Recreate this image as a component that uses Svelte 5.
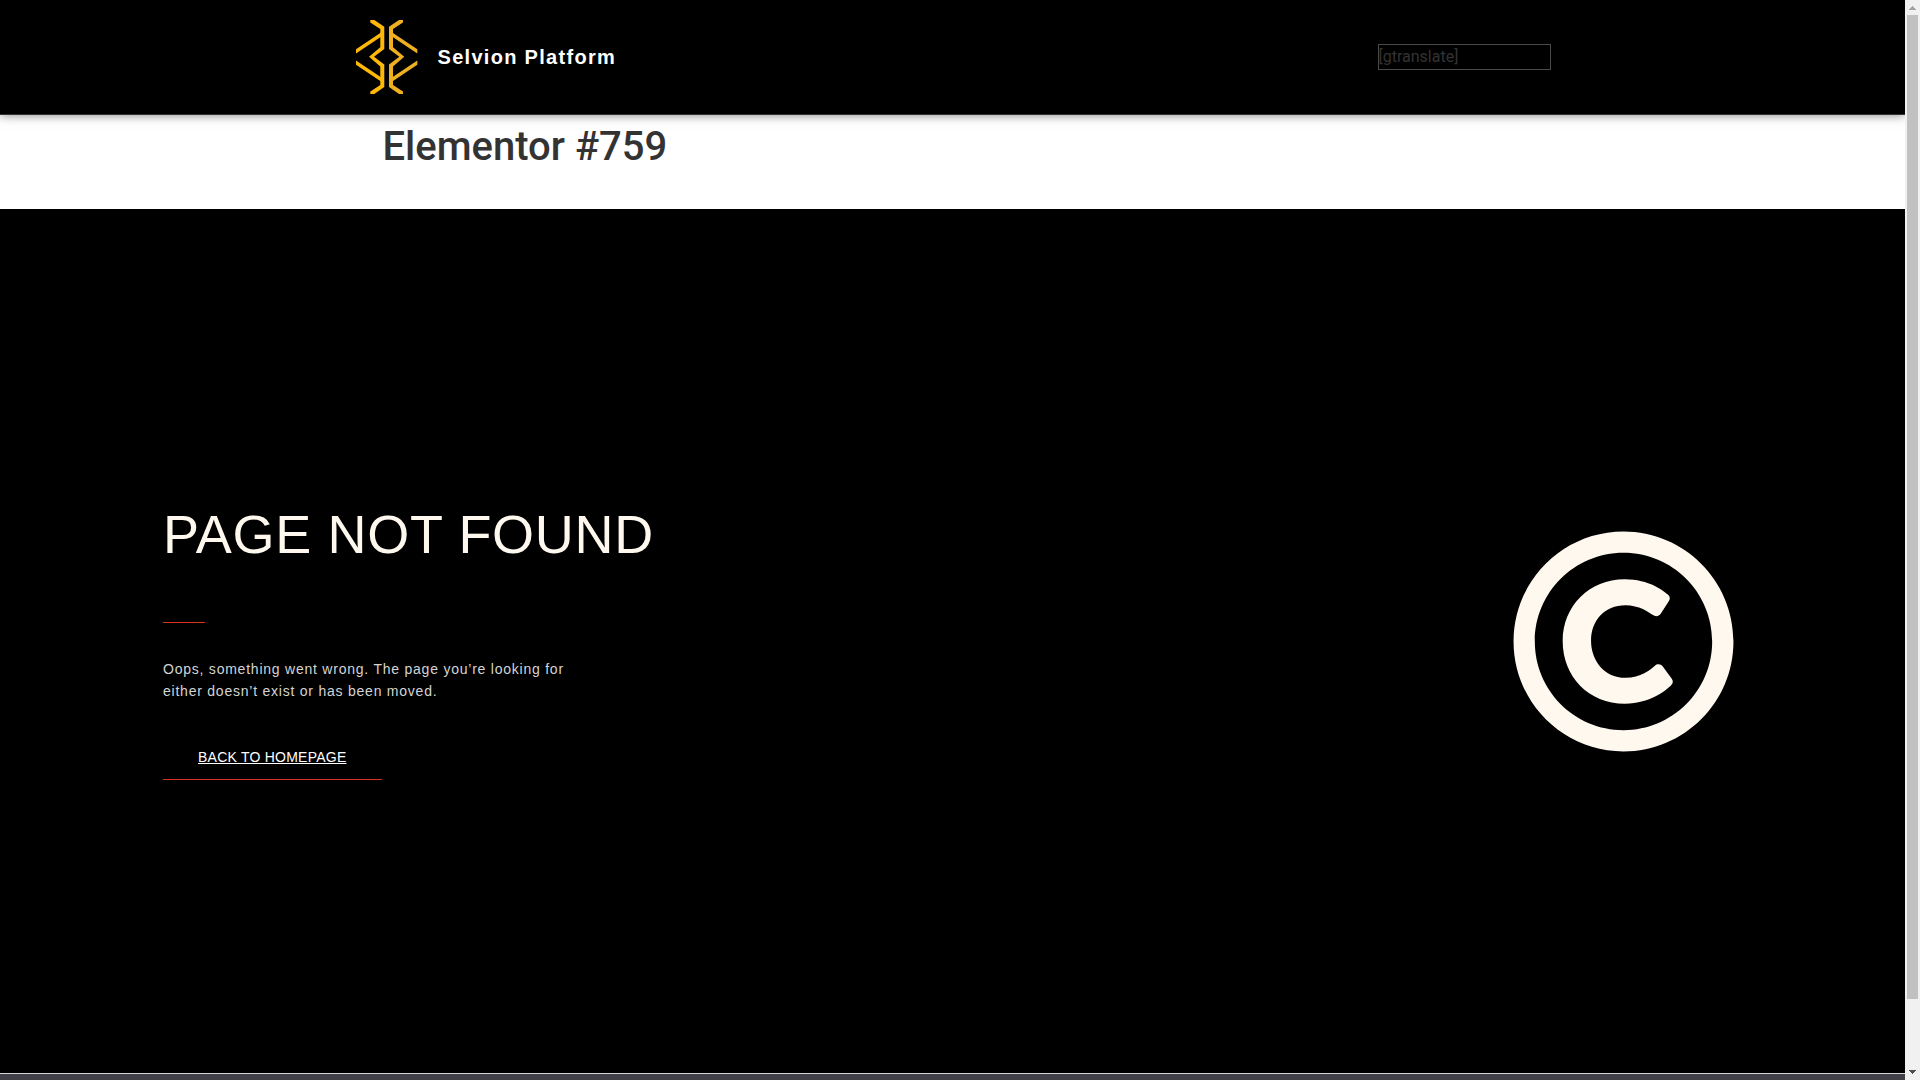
<script>
  const siteName = 'Selvion Platform';
  const pageTitle = 'Elementor #759';
</script>

<div class="viewport">
  <div class="page">
    <header class="site-header">
      <div class="header-inner">
        <a class="brand" href="/">
          <svg class="logo" viewBox="0 0 62 74" aria-hidden="true">
            <g fill="#ffb808">
              <path d="M14.3 0H18.3L28.3 6.7V29L18 36.8L28.3 44.6V67L18.3 74H14.3V71.6L24.3 65V46.6L13 36.8L24.3 27.3V8.9L14.3 2.4z" />
              <path d="M0 29.3L25 12.6V16.8L0 33.5z" />
              <path d="M0 44.7L25 61.4V57.2L0 40.5z" />
            </g>
            <g fill="#eeb020" transform="translate(61.3 0) scale(-1 1)">
              <path d="M14.3 0H18.3L28.3 6.7V29L18 36.8L28.3 44.6V67L18.3 74H14.3V71.6L24.3 65V46.6L13 36.8L24.3 27.3V8.9L14.3 2.4z" />
              <path d="M0 29.3L25 12.6V16.8L0 33.5z" />
              <path d="M0 44.7L25 61.4V57.2L0 40.5z" />
            </g>
          </svg>
          <span class="brand-name">{siteName}</span>
        </a>
        <div class="translate">[gtranslate]</div>
      </div>
    </header>

    <main>
      <div class="page-header">
        <h1>{pageTitle}</h1>
      </div>

      <section class="hero">
        <div class="hero-text">
          <h2>PAGE NOT FOUND</h2>
          <hr />
          <p>Oops, something went wrong. The page you’re looking for either doesn’t exist or has been moved.</p>
          <a class="button" href="/">BACK TO HOMEPAGE</a>
        </div>
        <svg class="hero-icon" viewBox="0 0 512 512" aria-hidden="true">
          <path d="M256 8C119.033 8 8 119.033 8 256s111.033 248 248 248 248-111.033 248-248S392.967 8 256 8zm0 448c-110.532 0-200-89.451-200-200 0-110.531 89.451-200 200-200 110.532 0 200 89.451 200 200 0 110.532-89.451 200-200 200zm107.351-101.064c-9.614 9.712-45.53 41.396-104.065 41.396-82.43 0-140.484-61.425-140.484-141.567 0-79.152 60.275-139.401 139.762-139.401 55.531 0 88.738 26.62 97.593 34.779a11.965 11.965 0 0 1 1.936 15.322l-18.155 28.113c-3.841 5.95-11.966 7.282-17.499 2.921-8.595-6.776-31.814-22.538-61.708-22.538-48.303 0-77.916 35.33-77.916 80.082 0 41.589 26.888 83.692 78.277 83.692 32.657 0 56.843-19.039 65.726-27.225 5.27-4.857 13.596-4.039 17.82 1.738l19.865 27.17a11.947 11.947 0 0 1-1.152 15.518z" />
        </svg>
      </section>
    </main>

    <footer class="site-footer"></footer>
  </div>

  <div class="scrollbar" aria-hidden="true">
    <svg class="arrow" viewBox="0 0 7 4" fill="#a3a3a3" shape-rendering="crispEdges"><path d="M3 0h1v1h1v1h1v1h1v1H0V3h1V2h1V1h1z" /></svg>
    <div class="thumb"></div>
    <svg class="arrow" viewBox="0 0 7 4" fill="#505050" shape-rendering="crispEdges"><path d="M0 0h7v1H6v1H5v1H4v1H3V3H2V2H1V1H0z" /></svg>
  </div>
</div>

<style>
  :global(body) {
    margin: 0;
    background: #fff;
    font-family: Roboto, 'Liberation Sans', sans-serif;
    font-size: 16px;
    color: #333;
  }

  .viewport { display: flex; height: 100vh; overflow: hidden; }
  .page { flex: 1; min-width: 0; display: flex; flex-direction: column; overflow: hidden; }

  .site-header {
    position: relative;
    background: #000;
    border-bottom: 1px solid #333;
    box-shadow: 0 0 10px rgba(0, 0, 0, 0.5);
  }
  .header-inner {
    display: flex;
    justify-content: space-between;
    align-items: center;
    box-sizing: border-box;
    max-width: 1196px;
    margin: 0 auto;
    padding: 20px 0 20px 1px;
  }
  .brand { display: flex; align-items: center; gap: 20px; color: #fff; text-decoration: none; }
  .logo { display: block; width: 62px; height: 74px; }
  .brand-name { font: bold 20px/24px 'Liberation Sans', Arial, sans-serif; letter-spacing: 0.065em; }
  .translate { width: 171px; border: 1px solid #4a4a4a; line-height: 24px; }

  .page-header { max-width: 1140px; margin: 0 auto; height: 94px; }
  h1 { margin: 0; padding: 8px 0; font-size: 40px; line-height: 48px; font-weight: 500; }

  .hero {
    display: flex;
    justify-content: space-between;
    align-items: center;
    box-sizing: border-box;
    min-height: 80vh;
    padding: 0 168px 0 163px;
    background: #000;
    font-family: 'Liberation Sans', Arial, sans-serif;
  }
  .hero-text { display: flex; flex-direction: column; align-items: flex-start; }
  h2 { margin: 0; font-size: 54px; line-height: 64px; font-weight: 400; letter-spacing: 0.013em; color: #fff8ee; }
  hr { width: 42px; margin: 56px 0 35px; border: 0; border-top: 1px solid #d9301f; }
  p { max-width: 420px; margin: 0; font-size: 14px; line-height: 22px; letter-spacing: 0.055em; color: #d4d4d4; }
  .button {
    margin-top: 33px;
    padding: 12px 35px;
    border-bottom: 1px solid #d9301f;
    font-size: 14px;
    line-height: 20px;
    letter-spacing: 0.017em;
    color: #fff;
  }
  .hero-icon { width: 227px; height: 227px; fill: #fff8ee; }

  .site-footer { flex: 1; border-top: 1px solid #d5d5d5; background: #404046; }

  .scrollbar {
    display: flex;
    flex-direction: column;
    align-items: center;
    box-sizing: border-box;
    width: 15px;
    padding: 6px 0;
    background: #f1f1f1;
  }
  .arrow { width: 7px; height: 4px; }
  .thumb { width: 11px; height: 984px; margin: 5px 0 auto; background: #c1c1c1; }
</style>
